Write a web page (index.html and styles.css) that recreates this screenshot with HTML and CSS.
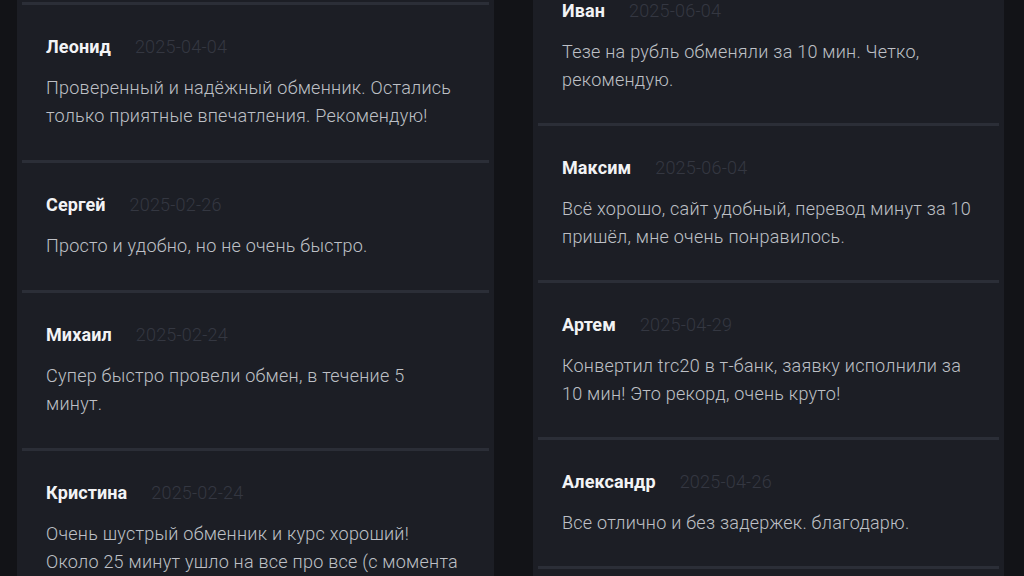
FILE: index.html
```html
<!DOCTYPE html>
<html>
  <head>
    <title>Отзывы</title>
    <link rel="stylesheet" href="styles.css">
  </head>

  <body>
    <div class="reviews">
      <div class="panel panel-left">
        <div class="list list-left">
          <div class="review">
            <div class="review-head">
              <span class="author">Леонид</span>
              <span class="date">2025-04-04</span>
            </div>
            <p class="text">Проверенный и надёжный обменник. Остались только приятные впечатления. Рекомендую!</p>
          </div>
          <div class="review">
            <div class="review-head">
              <span class="author">Сергей</span>
              <span class="date">2025-02-26</span>
            </div>
            <p class="text">Просто и удобно, но не очень быстро.</p>
          </div>
          <div class="review">
            <div class="review-head">
              <span class="author">Михаил</span>
              <span class="date">2025-02-24</span>
            </div>
            <p class="text">Супер быстро провели обмен, в течение 5 минут.</p>
          </div>
          <div class="review">
            <div class="review-head">
              <span class="author">Кристина</span>
              <span class="date">2025-02-24</span>
            </div>
            <p class="text">Очень шустрый обменник и курс хороший! Около 25 минут ушло на все про все (с момента создания заявки до получения средств).</p>
          </div>
        </div>
      </div>

      <div class="panel panel-right">
        <div class="list list-right">
          <div class="review">
            <div class="review-head">
              <span class="author">Иван</span>
              <span class="date">2025-06-04</span>
            </div>
            <p class="text">Тезе на рубль обменяли за 10 мин. Четко, рекомендую.</p>
          </div>
          <div class="review">
            <div class="review-head">
              <span class="author">Максим</span>
              <span class="date">2025-06-04</span>
            </div>
            <p class="text">Всё хорошо, сайт удобный, перевод минут за 10 пришёл, мне очень понравилось.</p>
          </div>
          <div class="review">
            <div class="review-head">
              <span class="author">Артем</span>
              <span class="date">2025-04-29</span>
            </div>
            <p class="text">Конвертил trc20 в т-банк, заявку исполнили за 10 мин! Это рекорд, очень круто!</p>
          </div>
          <div class="review">
            <div class="review-head">
              <span class="author">Александр</span>
              <span class="date">2025-04-26</span>
            </div>
            <p class="text">Все отлично и без задержек. благодарю.</p>
          </div>
          <div class="review">
            <div class="review-head">
              <span class="author">Дмитрий</span>
              <span class="date">2025-04-20</span>
            </div>
            <p class="text">Быстро и надёжно.</p>
          </div>
        </div>
      </div>
    </div>
  </body>
</html>
```

FILE: styles.css
```css
html,
body {
  margin: 0;
  height: 100%;
}

body {
  background-color: #121317;
  font-family: Roboto, "Noto Sans", sans-serif;
  overflow: hidden;
}

.reviews {
  display: flex;
  height: 100%;
  padding: 0 20px 0 17px;
  gap: 39px;
}

.panel {
  background-color: #1c1e25;
  overflow: hidden;
  padding: 0 5px;
}

.panel-left {
  width: 477px;
  box-sizing: border-box;
}

.panel-right {
  width: 471px;
  box-sizing: border-box;
}

.list-left {
  margin-top: 2px;
}

.list-right {
  margin-top: -34px;
}

.review {
  border-top: 3px solid #2b2e37;
  padding: 28px 26px 30px 24px;
}

.panel-left .review {
  padding-right: 28px;
}

.panel-right .review {
  padding-top: 28px;
  padding-bottom: 29px;
}

.review-head {
  display: flex;
  align-items: baseline;
  gap: 24px;
  line-height: 28px;
}

.author {
  color: #f2f3f5;
  font-size: 18px;
  font-weight: 700;
  letter-spacing: 0.1px;
}

.date {
  color: #343741;
  font-family: "Roboto Light", Roboto, sans-serif;
  font-size: 18px;
  font-weight: 300;
  letter-spacing: 0.2px;
}

.text {
  margin: 13px 0 0;
  color: #bec0c6;
  font-family: "Roboto Light", Roboto, sans-serif;
  font-size: 18px;
  font-weight: 300;
  line-height: 28px;
  letter-spacing: 0.25px;
}
```
